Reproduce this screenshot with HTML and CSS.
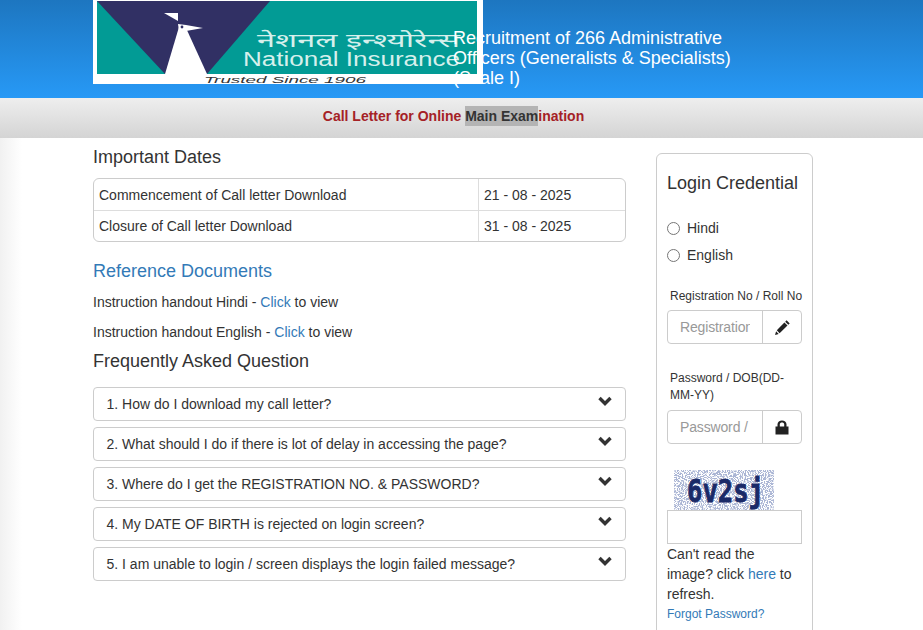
FILE: index.html
```html
<!DOCTYPE html>
<html lang="en">
<head>
<meta charset="utf-8">
<title>Recruitment of 266 Administrative Officers</title>
<link rel="stylesheet" href="styles.css">
</head>
<body>
<header class="top">
  <div class="logo-col">
    <svg class="logo" width="390" height="84" viewBox="0 0 390 84">
      <rect width="390" height="84" fill="#fff"/>
      <rect x="4" y="1" width="380" height="73" fill="#029b95"/>
      <polygon points="4,1 177,1 114,74 72,74" fill="#313064"/>
      <polygon points="72,74 114,74 93,28 86,27" fill="#fff"/>
      <polygon points="71,13 85,13 85,21" fill="#fff"/>
      <polygon points="85,24 93,25 110,28 93,31 86,31" fill="#fff"/>
      <circle cx="89" cy="27" r="1.4" fill="#313064"/>
      <text class="logo-hi" x="164" y="47" textLength="203" lengthAdjust="spacingAndGlyphs">नेशनल इन्श्योरेन्स</text>
      <text class="logo-en" x="150" y="66" textLength="217" lengthAdjust="spacingAndGlyphs">National Insurance</text>
      <text class="logo-tag" x="111" y="83" textLength="162" lengthAdjust="spacingAndGlyphs">Trusted Since 1906</text>
    </svg>
  </div>
  <h1 class="title">Recruitment of 266 Administrative Officers (Generalists &amp; Specialists) (Scale I)</h1>
</header>
<div class="subbar"><span class="subtext">Call Letter for Online <span class="sel">Main Exam</span>ination</span></div>
<main class="main">
  <section class="content">
    <h2 class="h-first">Important Dates</h2>
    <div class="dates">
      <div class="date-row"><div class="date-name">Commencement of Call letter Download</div><div class="date-val">21 - 08 - 2025</div></div>
      <div class="date-row"><div class="date-name">Closure of Call letter Download</div><div class="date-val">31 - 08 - 2025</div></div>
    </div>
    <h2 class="h-ref">Reference Documents</h2>
    <p class="doc">Instruction handout Hindi - <a href="#">Click</a> to view</p>
    <p class="doc">Instruction handout English - <a href="#">Click</a> to view</p>
    <h2 class="h-faq">Frequently Asked Question</h2>
    <div class="faq">
      <div class="faq-item"><span>1. How do I download my call letter?</span><svg class="chev" width="14" height="10" viewBox="0 0 14 10"><polyline points="1.5,2 7,7.5 12.5,2"/></svg></div>
      <div class="faq-item"><span>2. What should I do if there is lot of delay in accessing the page?</span><svg class="chev" width="14" height="10" viewBox="0 0 14 10"><polyline points="1.5,2 7,7.5 12.5,2"/></svg></div>
      <div class="faq-item"><span>3. Where do I get the REGISTRATION NO. &amp; PASSWORD?</span><svg class="chev" width="14" height="10" viewBox="0 0 14 10"><polyline points="1.5,2 7,7.5 12.5,2"/></svg></div>
      <div class="faq-item"><span>4. My DATE OF BIRTH is rejected on login screen?</span><svg class="chev" width="14" height="10" viewBox="0 0 14 10"><polyline points="1.5,2 7,7.5 12.5,2"/></svg></div>
      <div class="faq-item"><span>5. I am unable to login / screen displays the login failed message?</span><svg class="chev" width="14" height="10" viewBox="0 0 14 10"><polyline points="1.5,2 7,7.5 12.5,2"/></svg></div>
    </div>
  </section>
  <aside class="login">
    <h3 class="login-title">Login Credential</h3>
    <label class="radio r-first"><input type="radio" name="lang"><span>Hindi</span></label>
    <label class="radio"><input type="radio" name="lang"><span>English</span></label>
    <div class="field-label l-reg">Registration No / Roll No</div>
    <div class="group">
      <input class="g-input" type="text" placeholder="Registration No">
      <span class="addon"><svg width="15" height="15" viewBox="0 0 15 15"><path fill="#222" d="M11.6 0.3 14.7 3.4 13.3 4.8 10.2 1.7ZM9.4 2.5 12.5 5.6 4.6 13.2 1.8 10.2ZM1.1 11.2 3.7 13.9 0 15Z"/></svg></span>
    </div>
    <div class="field-label l-pass">Password / DOB(DD-MM-YY)</div>
    <div class="group">
      <input class="g-input" type="text" placeholder="Password / DOB">
      <span class="addon"><svg width="14" height="15" viewBox="0 0 14 15"><path fill="#222" d="M0.5 6.5H2.5V4.2C2.5 1.9 4.6.4 7 .4S11.5 1.9 11.5 4.2V6.5H13.5V14.5H.5ZM4.8 6.5H9.2V4.2C9.2 3 8.1 2.4 7 2.4S4.8 3 4.8 4.2Z"/></svg></span>
    </div>
    <svg class="captcha" width="100" height="40" viewBox="0 0 100 40">
      <defs>
        <filter id="noise" x="0" y="0" width="100%" height="100%">
          <feTurbulence type="fractalNoise" baseFrequency="0.95" numOctaves="2" seed="4"/>
          <feColorMatrix type="matrix" values="0 0 0 0 0.40  0 0 0 0 0.46  0 0 0 0 0.66  9 0 0 0 -4.0"/>
        </filter>
      </defs>
      <rect width="100" height="40" fill="#fff"/>
      <rect width="100" height="40" filter="url(#noise)"/>
      <text class="cap-text" x="13" y="32" textLength="77" lengthAdjust="spacingAndGlyphs">6v2sj</text>
    </svg>
    <input class="cap-input" type="text" aria-label="Captcha">
    <p class="refresh">Can't read the image? click <a href="#">here</a> to refresh.</p>
    <a class="forgot" href="#">Forgot Password?</a>
  </aside>
</main>
</body>
</html>
```
FILE: styles.css
```css
html, body { margin: 0; height: 100%; overflow: hidden; }
body {
  font-family: "Liberation Sans", Arial, sans-serif;
  font-size: 14px;
  line-height: 20px;
  color: #333;
  background: linear-gradient(to right, #f1f1f1, #fff 22px);
}
a { color: #337ab7; text-decoration: none; }

.top {
  height: 98px;
  padding-left: 93px;
  display: flex;
  background: linear-gradient(to bottom, #1d76c0, #2799f6);
}
.logo-col { width: 360px; flex: none; }
.logo { display: block; }
.logo-hi { font: 400 19px "Noto Sans", "Liberation Sans", sans-serif; fill: #d6f0ec; }
.logo-en { font: 19.5px "Liberation Sans", sans-serif; fill: #d6f0ec; }
.logo-tag { font: italic 400 9.5px "Liberation Sans", sans-serif; fill: #333; }
.title {
  position: relative;
  margin: 28px 0 0;
  width: 290px;
  font-size: 18px;
  font-weight: 400;
  line-height: 20px;
  color: #fff;
}

.subbar {
  height: 40px;
  box-sizing: border-box;
  padding: 0 16px 4px 0;
  display: flex;
  align-items: center;
  justify-content: center;
  background: linear-gradient(to bottom, #eee, #d4d4d4);
}
.subtext { font-weight: 700; color: #a52126; line-height: 20px; }
.sel { display: inline-block; background: #b4b4b4; color: #333; }

.main { display: flex; gap: 30px; height: 492px; box-sizing: border-box; overflow: hidden; padding: 15px 0 0 93px; align-items: flex-start; }
.content { width: 533px; flex: none; }
h2 { margin: 0; font-size: 18px; font-weight: 400; line-height: 20px; }
.h-first { margin-top: -6px; }
.dates { margin-top: 11px; border: 1px solid #ccc; border-radius: 6px; }
.date-row { display: flex; height: 31px; align-items: center; }
.date-row + .date-row { border-top: 1px solid #ddd; height: 30px; }
.date-name { width: 384px; padding-left: 5px; box-sizing: border-box; align-self: stretch; display: flex; align-items: center; }
.date-val { align-self: stretch; flex: 1; padding-left: 5px; border-left: 1px solid #ddd; display: flex; align-items: center; }
.h-ref { margin-top: 19px; color: #337ab7; }
.doc { margin: 11px 0 0; }
.doc + .doc { margin-top: 10px; }
.h-faq { margin-top: 9px; }
.faq { margin-top: 16px; display: flex; flex-direction: column; gap: 6px; }
.faq-item {
  height: 34px;
  box-sizing: border-box;
  border: 1px solid #ccc;
  border-radius: 4px;
  padding: 0 13px 0 12.5px;
  display: flex;
  align-items: center;
  justify-content: space-between;
}
.faq-item span { margin-top: -1px; }
.chev { margin-top: -6px; fill: none; stroke: #333; stroke-width: 3.4; }

.login {
  width: 157px;
  flex: none;
  box-sizing: border-box;
  height: 620px;
  border: 1px solid #ccc;
  border-radius: 6px;
  padding: 0 10px;
}
.login-title { margin: 19px 0 0; font-size: 18px; font-weight: 400; line-height: 20px; }
.radio { display: flex; align-items: center; height: 20px; margin-top: 7px; }
.r-first { margin-top: 25px; }
.radio input { margin: 0 7px 0 0; width: 13px; height: 13px; }
.field-label { font-size: 12px; line-height: 17px; padding-left: 3px; }
.l-reg { margin-top: 23px; margin-bottom: 5px; white-space: nowrap; }
.l-pass { margin-top: 26px; margin-bottom: 6px; }
.group {
  display: flex;
  height: 34px;
  box-sizing: border-box;
  border: 1px solid #ccc;
  border-radius: 4px;
}
.g-input {
  width: 94px;
  box-sizing: border-box;
  border: 0;
  background: transparent;
  padding: 0 12px;
  font: 14px "Liberation Sans", Arial, sans-serif;
  letter-spacing: -0.15px;
  border-radius: 4px 0 0 4px;
}
.g-input::placeholder { color: #999; opacity: 1; }
.addon {
  flex: 1;
  border-left: 1px solid #ccc;
  display: flex;
  align-items: center;
  justify-content: center;
}
.captcha { display: block; margin: 26px 0 0 7px; overflow: visible; }
.cap-text { font: 700 32px "DejaVu Sans Mono", monospace; fill: #1a2a68; stroke: #1a2a68; stroke-width: 0.8; }
.cap-input {
  display: block;
  position: relative;
  width: 135px;
  height: 34px;
  box-sizing: border-box;
  border: 1px solid #ccc;
  padding: 0;
  background: #fff;
}
.refresh { margin: 0; }
.forgot { display: block; font-size: 12px; }
```
